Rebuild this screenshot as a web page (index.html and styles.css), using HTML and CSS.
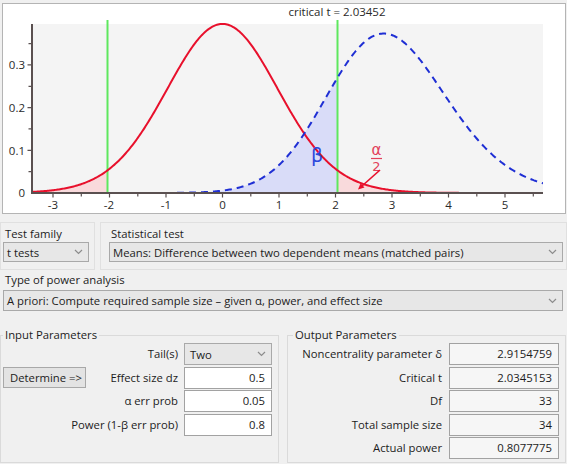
FILE: index.html
```html
<!DOCTYPE html>
<html>
<head>
<meta charset="utf-8">
<link rel="stylesheet" href="styles.css">
</head>
<body>
<div class="graph">
  <svg width="562" height="209" viewBox="3 4 562 209" xmlns="http://www.w3.org/2000/svg">
    <defs>
      <clipPath id="plotclip"><rect x="33" y="14" width="510" height="180"/></clipPath>
    </defs>
    <rect class="plot-bg" x="33" y="24" width="510" height="169"/>
    <g clip-path="url(#plotclip)">
      <path id="fillBeta" class="fill-beta"/>
      <path id="fillLeft" class="fill-alpha"/>
      <path id="fillRight" class="fill-alpha"/>
    </g>
    <line class="crit" x1="107.5" y1="20" x2="107.5" y2="193"/>
    <line class="crit" x1="337.5" y1="20" x2="337.5" y2="193"/>
    <g clip-path="url(#plotclip)">
      <path id="curveH0" class="curve-h0"/>
      <path id="curveH1" class="curve-h1"/>
    </g>
    <path id="ticks" class="ticks"/>
    <line class="axis" x1="32" y1="24" x2="32" y2="194"/>
    <line class="axis" x1="31" y1="193" x2="543" y2="193"/>
    <g class="ylab">
      <text x="25" y="197">0</text>
      <text x="25" y="155">0.1</text>
      <text x="25" y="112">0.2</text>
      <text x="25" y="69">0.3</text>
    </g>
    <g class="xlab">
      <text x="53" y="209">-3</text>
      <text x="109" y="209">-2</text>
      <text x="166" y="209">-1</text>
      <text x="222.5" y="209">0</text>
      <text x="279" y="209">1</text>
      <text x="335.5" y="209">2</text>
      <text x="392" y="209">3</text>
      <text x="448.5" y="209">4</text>
      <text x="505" y="209">5</text>
    </g>
    <text class="crit-label" x="337" y="16">critical t = 2.03452</text>
    <text class="beta" x="317" y="162">β</text>
    <text class="alpha" x="376.5" y="155">α</text>
    <line class="alpha-bar" x1="371" y1="158.5" x2="382" y2="158.5"/>
    <text class="alpha two" x="376.5" y="171">2</text>
    <line class="arrow" x1="380" y1="170" x2="362" y2="186"/>
    <polygon class="arrow-head" points="358,189.5 364.5,187.6 360.6,183.3"/>
  </svg>
</div>

<div class="top-row">
  <div class="group family">
    <div class="label">Test family</div>
    <div class="select">
      <span>t tests</span>
      <svg class="chev" width="9" height="6" viewBox="0 0 9 6"><polyline points="1,1 4.5,4.5 8,1"/></svg>
    </div>
  </div>
  <div class="group stat">
    <div class="label">Statistical test</div>
    <div class="select">
      <span>Means: Difference between two dependent means (matched pairs)</span>
      <svg class="chev" width="9" height="6" viewBox="0 0 9 6"><polyline points="1,1 4.5,4.5 8,1"/></svg>
    </div>
  </div>
</div>

<div class="power">
  <div class="label">Type of power analysis</div>
  <div class="select tall">
    <span>A priori: Compute required sample size – given α, power, and effect size</span>
    <svg class="chev" width="9" height="6" viewBox="0 0 9 6"><polyline points="1,1 4.5,4.5 8,1"/></svg>
  </div>
</div>

<div class="bottom-row">
  <fieldset class="fs input-fs">
    <legend>Input Parameters</legend>
    <div class="in-grid">
      <div class="plabel wide">Tail(s)</div>
      <div class="select field-select">
        <span>Two</span>
        <svg class="chev" width="9" height="6" viewBox="0 0 9 6"><polyline points="1,1 4.5,4.5 8,1"/></svg>
      </div>

      <div class="btn">Determine =&gt;</div>
      <div class="plabel">Effect size dz</div>
      <div class="field">0.5</div>

      <div class="plabel wide">α err prob</div>
      <div class="field">0.05</div>

      <div class="plabel wide">Power (1-β err prob)</div>
      <div class="field">0.8</div>
    </div>
  </fieldset>
  <fieldset class="fs output-fs">
    <legend>Output Parameters</legend>
    <div class="out-grid">
      <div class="plabel">Noncentrality parameter δ</div>
      <div class="field ro">2.9154759</div>
      <div class="plabel">Critical t</div>
      <div class="field ro">2.0345153</div>
      <div class="plabel">Df</div>
      <div class="field ro">33</div>
      <div class="plabel">Total sample size</div>
      <div class="field ro">34</div>
      <div class="plabel">Actual power</div>
      <div class="field ro">0.8077775</div>
    </div>
  </fieldset>
</div>
<script src="script.js"></script>
</body>
</html>
```

FILE: styles.css
```css
* { box-sizing: border-box; }

body {
  margin: 0;
  width: 567px;
  height: 464px;
  overflow: hidden;
  background: #f0f0f0;
  font-family: "Open Sans", "Liberation Sans", Arial, sans-serif;
  font-size: 11.3px;
  color: #1c1c1c;
}

/* ---------- graph ---------- */
.graph {
  margin: 3px 1px 0 2px;
  height: 211px;
  border: 1px solid #b4b4b4;
  background: #ffffff;
}
.graph svg { display: block; }

.plot-bg { fill: #f4f4f4; }
.fill-beta { fill: #d9dcf8; }
.fill-alpha { fill: #f9dadc; }
.curve-h0 { fill: none; stroke: #e8102c; stroke-width: 2; }
.curve-h1 { fill: none; stroke: #1f2fd4; stroke-width: 2; stroke-dasharray: 7 5; }
.crit { stroke: #5ee85e; stroke-width: 2; }
.axis { stroke: #5a5050; stroke-width: 2; }
.ticks { fill: none; stroke: #5a5050; stroke-width: 1.2; }

.ylab text, .xlab text, .crit-label {
  font-family: "Open Sans", "Liberation Sans", Arial, sans-serif;
  font-size: 11.5px;
  fill: #2a2a2a;
}
.ylab text { text-anchor: end; }
.xlab text, .crit-label { text-anchor: middle; }

.beta {
  font-family: "DejaVu Sans", sans-serif;
  font-size: 19px;
  fill: #2c48dc;
  text-anchor: middle;
}
.alpha {
  font-family: "DejaVu Sans", sans-serif;
  font-size: 15px;
  fill: #e2405a;
  text-anchor: middle;
}
.alpha.two { font-size: 13px; }
.alpha-bar { stroke: #e2405a; stroke-width: 1.2; }
.arrow { stroke: #e8102c; stroke-width: 1.6; }
.arrow-head { fill: #e8102c; }

/* ---------- selectors ---------- */
.top-row {
  display: flex;
  margin-top: 8px;
}
.group { border: 1px solid #e0e0e0; }
.family {
  width: 95px;
  padding: 3px 0 7px 2px;
}
.family .select { width: 86px; }
.stat {
  flex: 1;
  margin-left: 5px;
  padding: 3px 3px 7px 8px;
}

.label {
  line-height: 15px;
  padding-left: 2px;
}

.select {
  height: 20px;
  margin-top: 1px;
  border: 1px solid #a9a9a9;
  background: #e7e7e7;
  display: flex;
  align-items: center;
  justify-content: space-between;
  padding: 0 5px 0 3px;
  white-space: nowrap;
}
.select.tall {
  height: 21px;
  margin-top: 3px;
}
.chev polyline {
  fill: none;
  stroke: #8c8c8c;
  stroke-width: 1.2;
}

.power {
  padding: 2px 4px 0 3px;
}
.power .label { padding-left: 2px; }

/* ---------- parameters ---------- */
.bottom-row {
  display: flex;
  margin-top: 17px;
}
.fs {
  margin: 0;
  height: 135px;
  border: 1px solid #dadada;
  min-width: 0;
}
.fs legend {
  padding: 0 2px;
  line-height: 14px;
}
.input-fs {
  width: 279px;
  flex: none;
  padding: 1px 6px 0 2px;
}
.output-fs {
  width: 279px;
  flex: none;
  margin-left: 8px;
  padding: 1px 6px 0 2px;
}
.output-fs legend { margin-left: 3px; }

.in-grid {
  display: grid;
  grid-template-columns: 83px minmax(0, 1fr) 88px;
  grid-auto-rows: 22px;
  column-gap: 6px;
  row-gap: 1.5px;
}
.in-grid .wide { grid-column: 1 / 3; }
.out-grid {
  display: grid;
  grid-template-columns: minmax(0, 1fr) 110px;
  grid-auto-rows: 22px;
  column-gap: 7px;
  row-gap: 1.5px;
}

.plabel {
  text-align: right;
  line-height: 22px;
  white-space: nowrap;
}

.field {
  border: 1px solid #a2a2a2;
  background: #ffffff;
  text-align: right;
  padding-right: 6px;
  line-height: 20px;
}
.field.ro { background: #f6f6f6; }

.field-select {
  height: 22px;
  margin-top: 0;
  padding-left: 5px;
}

.btn {
  height: 21px;
  margin-top: 0.5px;
  border: 1px solid #a8a8a8;
  background: #e3e3e3;
  line-height: 19px;
  padding-left: 6px;
  white-space: nowrap;
}
```

FILE: script.js
```js
(function () {
  function lgamma(x) {
    var c = [0.99999999999980993, 676.5203681218851, -1259.1392167224028,
      771.32342877765313, -176.61502916214059, 12.507343278686905,
      -0.13857109526572012, 9.9843695780195716e-6, 1.5056327351493116e-7];
    if (x < 0.5) return Math.log(Math.PI / Math.sin(Math.PI * x)) - lgamma(1 - x);
    x -= 1;
    var a = c[0], t = x + 7.5;
    for (var i = 1; i < 9; i++) a += c[i] / (x + i);
    return 0.5 * Math.log(2 * Math.PI) + (x + 0.5) * Math.log(t) - t + Math.log(a);
  }
  var nu = 33, delta = 2.9154759, tc = 2.0345153;
  var lc = lgamma((nu + 1) / 2) - lgamma(nu / 2) - 0.5 * Math.log(nu * Math.PI);
  function tpdf(x) { return Math.exp(lc - (nu + 1) / 2 * Math.log(1 + x * x / nu)); }
  var lk = -(nu / 2) * Math.log(2) - lgamma(nu / 2);
  function gs(s) { var v = nu * s * s; return Math.exp(lk + (nu / 2 - 1) * Math.log(v) - v / 2) * 2 * nu * s; }
  var S = [], W = [], n = 600, a0 = 0.2, b0 = 2.2, h = (b0 - a0) / n;
  for (var i = 0; i <= n; i++) {
    var s = a0 + i * h;
    S.push(s);
    W.push(gs(s) * h * ((i === 0 || i === n) ? 0.5 : 1));
  }
  function nct(t) {
    var sum = 0;
    for (var i = 0; i <= n; i++) {
      var z = t * S[i] - delta;
      sum += W[i] * S[i] * Math.exp(-z * z / 2);
    }
    return sum / Math.sqrt(2 * Math.PI);
  }
  function X(t) { return 222.5 + 56.5 * t; }
  function Y(p) { return 193 - 427 * p; }
  var tmin = (33 - 222.5) / 56.5, tmax = (543 - 222.5) / 56.5;
  function line(f, t0, t1) {
    var d = '', steps = Math.max(10, Math.ceil((t1 - t0) / 0.02));
    for (var k = 0; k <= steps; k++) {
      var t = t0 + (t1 - t0) * k / steps;
      d += (k ? 'L' : 'M') + X(t).toFixed(2) + ',' + Y(f(t)).toFixed(2);
    }
    return d;
  }
  function area(f, t0, t1) {
    return line(f, t0, t1) + 'L' + X(t1).toFixed(2) + ',193L' + X(t0).toFixed(2) + ',193Z';
  }
  function set(id, d) { document.getElementById(id).setAttribute('d', d); }
  set('curveH0', line(tpdf, tmin, tmax));
  set('curveH1', line(nct, tmin, tmax));
  set('fillLeft', area(tpdf, tmin, -tc));
  set('fillRight', area(tpdf, tc, tmax));
  set('fillBeta', area(nct, tmin, tc));

  var d = '';
  for (var v = -3; v <= 5.5; v += 0.5) {
    var x = X(v), major = Math.abs(v - Math.round(v)) < 1e-6;
    d += 'M' + x.toFixed(1) + ',193L' + x.toFixed(1) + ',' + (major ? 197.5 : 196.5);
  }
  for (var p = 0.05; p <= 0.36; p += 0.05) {
    var y = Y(p), maj = Math.abs(p * 10 - Math.round(p * 10)) < 1e-6;
    d += 'M32,' + y.toFixed(1) + 'L' + (maj ? 27.5 : 28.5) + ',' + y.toFixed(1);
  }
  set('ticks', d);
})();
```
